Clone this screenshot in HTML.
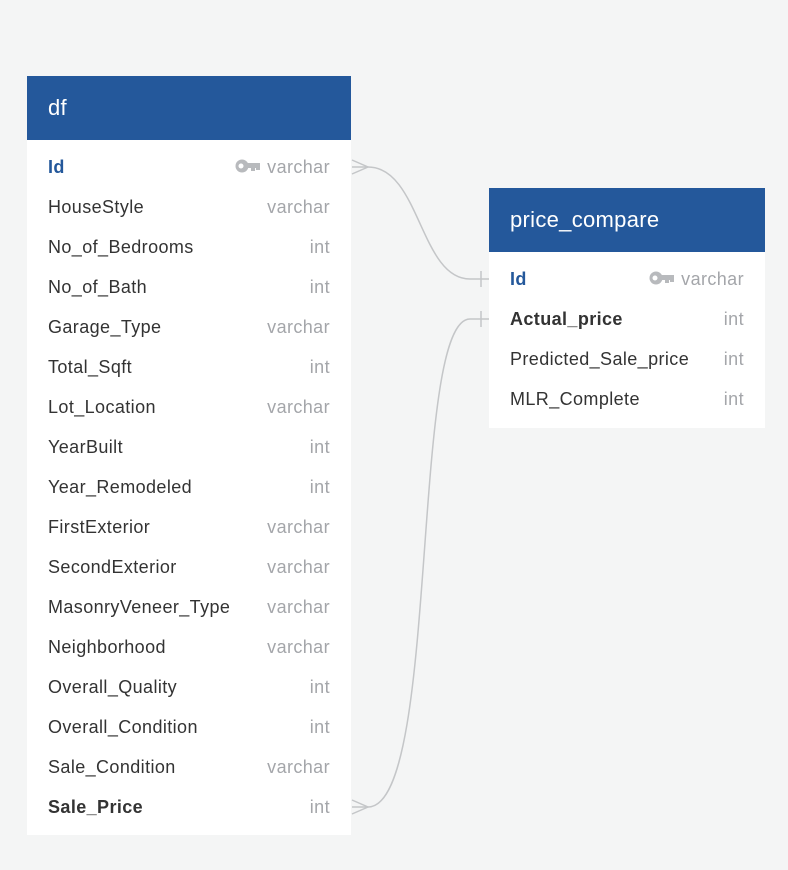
<!DOCTYPE html>
<html><head><style>
body{margin:0;width:788px;height:870px;background:#f4f5f5;font-family:"Liberation Sans",sans-serif;position:relative;overflow:hidden}
.t{position:absolute;background:#fff}
.h{background:#24589b;color:#fff;font-size:22px;height:64px;line-height:64px;padding-left:21px;letter-spacing:0.3px}
.r{height:40px;line-height:40px;position:relative;font-size:18px;color:#333;padding-left:21px;letter-spacing:0.4px}
.r span{position:absolute;right:21px;top:0;color:#a4a6aa}
.b{font-weight:bold}
.pk{color:#24589b;font-weight:bold}
.k{display:inline-block;vertical-align:middle;margin-right:7px;margin-top:-4px}
</style></head><body>
<svg style="position:absolute;left:0;top:0" width="788" height="870">
<g fill="none" stroke="#c4c6c8" stroke-width="1.5">
<path d="M352 167 H368 C420 167 420 279 470 279 H489"/>
<path d="M352 160 L368 167 L352 174"/>
<path d="M481 271 V287"/>
<path d="M352 807 H368 C440 807 410 319 470 319 H489"/>
<path d="M352 800 L368 807 L352 814"/>
<path d="M481 311 V327"/>
</g></svg>
<div class="t" style="left:27px;top:76px;width:324px;height:759px">
<div class="h">df</div>
<div style="height:7px"></div>
<div class="r pk">Id<span><svg class="k" width="25" height="14" viewBox="0 0 25 14"><circle cx="7" cy="7" r="6.5" fill="#b8babd"/><circle cx="6" cy="7" r="2.5" fill="#fff"/><rect x="12" y="4" width="13" height="5" fill="#b8babd"/><rect x="16" y="8" width="4" height="4" fill="#b8babd"/><rect x="21" y="8" width="4" height="3" fill="#b8babd"/></svg><b style="font-weight:normal">varchar</b></span></div>
<div class="r">HouseStyle<span>varchar</span></div>
<div class="r">No_of_Bedrooms<span>int</span></div>
<div class="r">No_of_Bath<span>int</span></div>
<div class="r">Garage_Type<span>varchar</span></div>
<div class="r">Total_Sqft<span>int</span></div>
<div class="r">Lot_Location<span>varchar</span></div>
<div class="r">YearBuilt<span>int</span></div>
<div class="r">Year_Remodeled<span>int</span></div>
<div class="r">FirstExterior<span>varchar</span></div>
<div class="r">SecondExterior<span>varchar</span></div>
<div class="r">MasonryVeneer_Type<span>varchar</span></div>
<div class="r">Neighborhood<span>varchar</span></div>
<div class="r">Overall_Quality<span>int</span></div>
<div class="r">Overall_Condition<span>int</span></div>
<div class="r">Sale_Condition<span>varchar</span></div>
<div class="r b">Sale_Price<span style="font-weight:normal">int</span></div>
</div>
<div class="t" style="left:489px;top:188px;width:276px;height:240px">
<div class="h">price_compare</div>
<div style="height:7px"></div>
<div class="r pk">Id<span><svg class="k" width="25" height="14" viewBox="0 0 25 14"><circle cx="7" cy="7" r="6.5" fill="#b8babd"/><circle cx="6" cy="7" r="2.5" fill="#fff"/><rect x="12" y="4" width="13" height="5" fill="#b8babd"/><rect x="16" y="8" width="4" height="4" fill="#b8babd"/><rect x="21" y="8" width="4" height="3" fill="#b8babd"/></svg><b style="font-weight:normal">varchar</b></span></div>
<div class="r b">Actual_price<span style="font-weight:normal">int</span></div>
<div class="r">Predicted_Sale_price<span>int</span></div>
<div class="r">MLR_Complete<span>int</span></div>
</div>
</body></html>
